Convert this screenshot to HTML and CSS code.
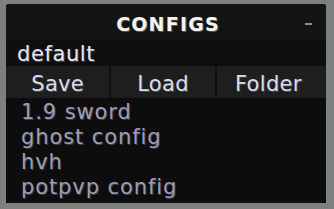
FILE: index.html
```html
<!DOCTYPE html>
<html>
<head>
<meta charset="utf-8">
<link rel="stylesheet" href="styles.css">
</head>
<body>
<div class="panel">
  <div class="header">
    <span class="title">CONFIGS</span>
    <span class="minimize"></span>
  </div>
  <div class="name-row">default</div>
  <div class="buttons">
    <div class="btn">Save</div>
    <div class="btn">Load</div>
    <div class="btn">Folder</div>
  </div>
  <div class="list">
    <div class="item">1.9 sword</div>
    <div class="item">ghost config</div>
    <div class="item">hvh</div>
    <div class="item">potpvp config</div>
  </div>
</div>
</body>
</html>
```
FILE: styles.css
```css
html, body {
  margin: 0;
  padding: 0;
}
body {
  background: #7c8180;
  width: 334px;
  height: 209px;
  overflow: hidden;
  font-family: "DejaVu Sans", sans-serif;
}
.panel {
  margin: 4px 8px 0 6px;
  width: 320px;
  height: 199px;
  display: flex;
  flex-direction: column;
  background: #0d0d0d;
  border-radius: 3px 3px 0 0;
  overflow: hidden;
}
.header {
  position: relative;
  height: 36px;
  background: #141414;
  display: flex;
  align-items: center;
  justify-content: center;
}
.title {
  color: #f4f4f4;
  font-size: 19px;
  font-weight: 600;
  letter-spacing: 1.2px;
  margin-left: 4px;
  margin-top: 4px;
  text-shadow: 1px 1px 0 #555;
}
.minimize {
  position: absolute;
  left: 299px;
  top: 19px;
  width: 7px;
  height: 2px;
  background: #8a8aa8;
}
.name-row {
  height: 26px;
  background: #0f0f0f;
  color: #e6e6ee;
  font-size: 21px;
  letter-spacing: 0.6px;
  line-height: 28px;
  padding-left: 11px;
  text-shadow: 1px 1px 0 #4a4a55;
}
.buttons {
  height: 32px;
  display: flex;
  gap: 2px;
  background: #0f0f0f;
}
.btn {
  flex: 1;
  background: #1e1e1e;
  color: #dcdce6;
  font-size: 21px;
  letter-spacing: 0.3px;
  padding-top: 3px;
  display: flex;
  align-items: center;
  justify-content: center;
  text-shadow: 1px 1px 0 #4a4a55;
}
.btn:last-child {
  padding-right: 6px;
}
.list {
  flex: 1;
  padding-left: 15px;
  padding-top: 2px;
}
.item {
  height: 25px;
  line-height: 25px;
  color: #9c9cb2;
  font-size: 21px;
  letter-spacing: 0.9px;
  text-shadow: 1px 1px 0 #3c3c48;
}
```
